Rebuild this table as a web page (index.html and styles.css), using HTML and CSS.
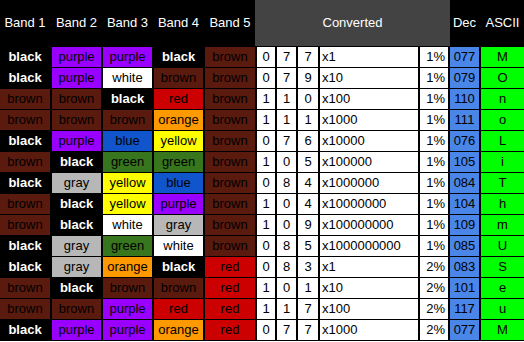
FILE: index.html
```html
<!DOCTYPE html>
<html>
<head>
<meta charset="utf-8">
<link rel="stylesheet" href="styles.css">
</head>
<body>
<div class="sheet">
  <div class="h">Band 1</div><div class="h">Band 2</div><div class="h">Band 3</div><div class="h">Band 4</div><div class="h">Band 5</div>
  <div class="h conv">Converted</div><div class="h">Dec</div><div class="h">ASCII</div>

  <div class="c k">black</div><div class="c p">purple</div><div class="c p">purple</div><div class="c k">black</div><div class="c b">brown</div>
  <div class="d">0</div><div class="d">7</div><div class="d">7</div><div class="d l">x1</div><div class="d r">1%</div><div class="dec">077</div><div class="asc">M</div>

  <div class="c k">black</div><div class="c p">purple</div><div class="c w">white</div><div class="c b">brown</div><div class="c b">brown</div>
  <div class="d">0</div><div class="d">7</div><div class="d">9</div><div class="d l">x10</div><div class="d r">1%</div><div class="dec">079</div><div class="asc">O</div>

  <div class="c b">brown</div><div class="c b">brown</div><div class="c k">black</div><div class="c rd">red</div><div class="c b">brown</div>
  <div class="d">1</div><div class="d">1</div><div class="d">0</div><div class="d l">x100</div><div class="d r">1%</div><div class="dec">110</div><div class="asc">n</div>

  <div class="c b">brown</div><div class="c b">brown</div><div class="c b">brown</div><div class="c o">orange</div><div class="c b">brown</div>
  <div class="d">1</div><div class="d">1</div><div class="d">1</div><div class="d l">x1000</div><div class="d r">1%</div><div class="dec">111</div><div class="asc">o</div>

  <div class="c k">black</div><div class="c p">purple</div><div class="c bl">blue</div><div class="c y">yellow</div><div class="c b">brown</div>
  <div class="d">0</div><div class="d">7</div><div class="d">6</div><div class="d l">x10000</div><div class="d r">1%</div><div class="dec">076</div><div class="asc">L</div>

  <div class="c b">brown</div><div class="c k">black</div><div class="c g">green</div><div class="c g">green</div><div class="c b">brown</div>
  <div class="d">1</div><div class="d">0</div><div class="d">5</div><div class="d l">x100000</div><div class="d r">1%</div><div class="dec">105</div><div class="asc">i</div>

  <div class="c k">black</div><div class="c gy">gray</div><div class="c y">yellow</div><div class="c bl">blue</div><div class="c b">brown</div>
  <div class="d">0</div><div class="d">8</div><div class="d">4</div><div class="d l">x1000000</div><div class="d r">1%</div><div class="dec">084</div><div class="asc">T</div>

  <div class="c b">brown</div><div class="c k">black</div><div class="c y">yellow</div><div class="c p">purple</div><div class="c b">brown</div>
  <div class="d">1</div><div class="d">0</div><div class="d">4</div><div class="d l">x10000000</div><div class="d r">1%</div><div class="dec">104</div><div class="asc">h</div>

  <div class="c b">brown</div><div class="c k">black</div><div class="c w">white</div><div class="c gy">gray</div><div class="c b">brown</div>
  <div class="d">1</div><div class="d">0</div><div class="d">9</div><div class="d l">x100000000</div><div class="d r">1%</div><div class="dec">109</div><div class="asc">m</div>

  <div class="c k">black</div><div class="c gy">gray</div><div class="c g">green</div><div class="c w">white</div><div class="c b">brown</div>
  <div class="d">0</div><div class="d">8</div><div class="d">5</div><div class="d l">x1000000000</div><div class="d r">1%</div><div class="dec">085</div><div class="asc">U</div>

  <div class="c k">black</div><div class="c gy">gray</div><div class="c o">orange</div><div class="c k">black</div><div class="c rd">red</div>
  <div class="d">0</div><div class="d">8</div><div class="d">3</div><div class="d l">x1</div><div class="d r">2%</div><div class="dec">083</div><div class="asc">S</div>

  <div class="c b">brown</div><div class="c k">black</div><div class="c b">brown</div><div class="c b">brown</div><div class="c rd">red</div>
  <div class="d">1</div><div class="d">0</div><div class="d">1</div><div class="d l">x10</div><div class="d r">2%</div><div class="dec">101</div><div class="asc">e</div>

  <div class="c b">brown</div><div class="c b">brown</div><div class="c p">purple</div><div class="c rd">red</div><div class="c rd">red</div>
  <div class="d">1</div><div class="d">1</div><div class="d">7</div><div class="d l">x100</div><div class="d r">2%</div><div class="dec">117</div><div class="asc">u</div>

  <div class="c k">black</div><div class="c p">purple</div><div class="c p">purple</div><div class="c o">orange</div><div class="c rd">red</div>
  <div class="d">0</div><div class="d">7</div><div class="d">7</div><div class="d l">x1000</div><div class="d r">2%</div><div class="dec">077</div><div class="asc">M</div>
</div>
</body>
</html>
```
FILE: styles.css
```css
html, body {
  margin: 0;
  padding: 0;
  background: #ffffff;
}
.sheet {
  display: grid;
  grid-template-columns: 50px 49px 49px 49px 50px 18px 19px 20px 98px 28px 29px 43px;
  grid-template-rows: 46px repeat(14, 20px);
  column-gap: 2px;
  row-gap: 1px;
  width: 524px;
  background: #000000;
  padding-bottom: 1px;
  font-family: "Liberation Sans", Arial, sans-serif;
  font-size: 13px;
  color: #000000;
}
.sheet > div {
  line-height: 20px;
  text-align: center;
  white-space: nowrap;
  overflow: hidden;
}
.h {
  background: #000000;
  color: #ffffff;
  line-height: 46px !important;
}
.conv {
  grid-column: span 5;
  background: #434343;
  margin-right: -2px;
  margin-left: -2px;
}
.c { color: #000000; }
.k { background: #000000; color: #ffffff; font-weight: bold; }
.p { background: #9900ff; }
.w { background: #ffffff; }
.b { background: #5b1a0e; }
.rd { background: #cc0000; }
.o { background: #ff9900; }
.y { background: #ffff00; }
.bl { background: #1155cc; }
.g { background: #38761d; }
.gy { background: #b7b7b7; }
.d { background: #ffffff; }
.sheet > .l { text-align: left; padding-left: 2px; }
.sheet > .r { text-align: right; padding-right: 3px; }
.dec { background: #4a86e8; }
.asc { background: #00ff00; }
```
